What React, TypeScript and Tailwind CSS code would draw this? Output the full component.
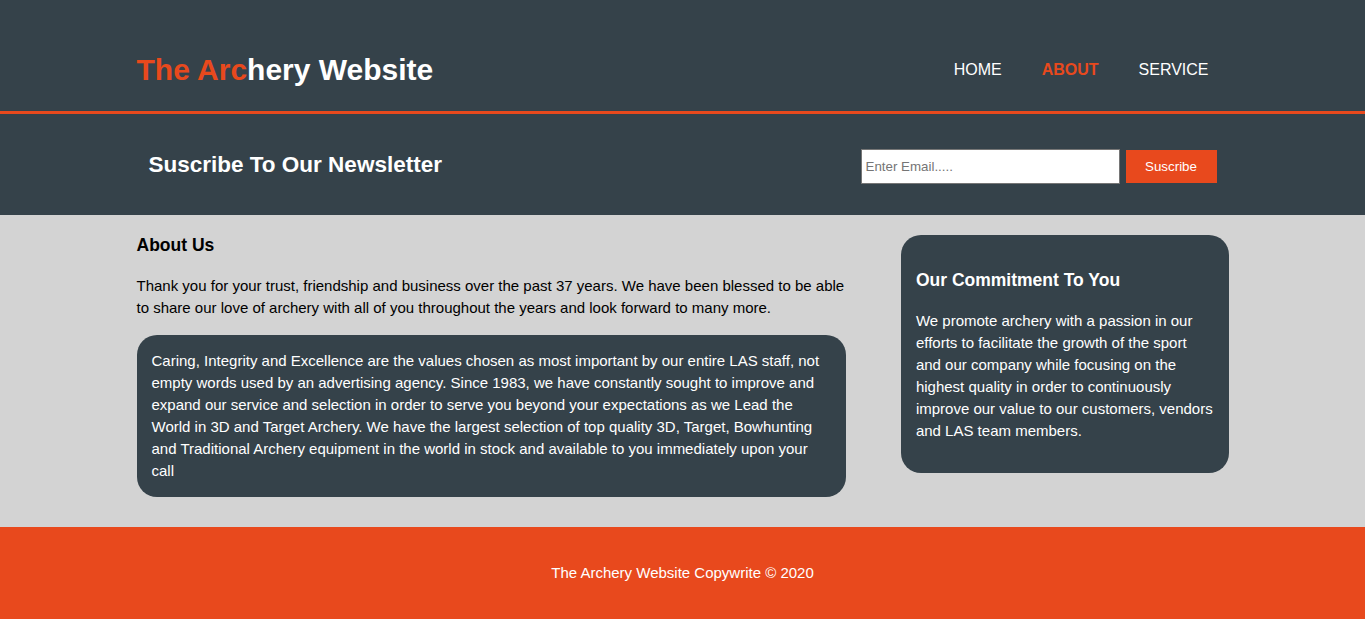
const navLinks = [
  { label: "HOME", active: false },
  { label: "ABOUT", active: true },
  { label: "SERVICE", active: false },
];

export default function App() {
  return (
    <div className="min-h-screen bg-[#d3d3d3] font-['Liberation_Sans',Arial,sans-serif] text-[15px] leading-[22px]">
      <header className="h-[114px] border-b-[3px] border-[#e8491d] bg-[#35424a] text-white">
        <div className="mx-auto flex h-full w-[80%] items-center justify-between pt-[28px]">
          <h1 className="text-[30px] font-bold leading-[34px]">
            <span className="text-[#e8491d]">The Arc</span>hery Website
          </h1>
          <ul className="flex">
            {navLinks.map((link) => (
              <li key={link.label} className="px-5">
                <a
                  href="#"
                  className={
                    link.active
                      ? "text-[16px] font-bold text-[#e8491d]"
                      : "text-[16px] text-white"
                  }
                >
                  {link.label}
                </a>
              </li>
            ))}
          </ul>
        </div>
      </header>

      <section className="h-[101px] bg-[#35424a] text-white">
        <div className="mx-auto flex h-full w-[80%] items-center justify-between px-3">
          <h2 className="text-[22.5px] font-bold leading-[26px]">Suscribe To Our Newsletter</h2>
          <form className="mt-[4px] flex items-center gap-[6px]" onSubmit={(e) => e.preventDefault()}>
            <input
              type="email"
              placeholder="Enter Email....."
              className="h-[35px] w-[259px] border border-[#767676] bg-white px-1 text-[13.33px] text-black placeholder:text-[#757575]"
            />
            <button
              type="submit"
              className="h-[33px] w-[91px] bg-[#e8491d] text-[13.33px] text-white"
            >
              Suscribe
            </button>
          </form>
        </div>
      </section>

      <main className="mx-auto flex w-[80%] items-start justify-between pt-5 pb-[30px]">
        <article className="w-[65%]">
          <h3 className="text-[17.5px] font-bold leading-[20px]">About Us</h3>
          <p className="mt-5">
            Thank you for your trust, friendship and business over the past 37 years. We have been blessed to be able
            to share our love of archery with all of you throughout the years and look forward to many more.
          </p>
          <div className="mt-4 rounded-[20px] bg-[#35424a] px-[15px] pt-[15px] pb-[15px] text-white">
            <p>
              Caring, Integrity and Excellence are the values chosen as most important by our entire LAS staff, not
              empty words used by an advertising agency. Since 1983, we have constantly sought to improve and expand
              our service and selection in order to serve you beyond your expectations as we Lead the World in 3D and
              Target Archery. We have the largest selection of top quality 3D, Target, Bowhunting and Traditional
              Archery equipment in the world in stock and available to you immediately upon your call
            </p>
          </div>
        </article>

        <aside className="w-[30%] rounded-[20px] bg-[#35424a] px-[15px] pt-[15px] pb-[31px] text-white">
          <h3 className="mt-5 text-[17.5px] font-bold leading-[20px]">Our Commitment To You</h3>
          <p className="mt-5">
            We promote archery with a passion in our efforts to facilitate the growth of the sport and our company
            while focusing on the highest quality in order to continuously improve our value to our customers, vendors
            and LAS team members.
          </p>
        </aside>
      </main>

      <footer className="flex h-[92px] items-center justify-center bg-[#e8491d] text-white">
        <p>The Archery Website Copywrite &copy; 2020</p>
      </footer>
    </div>
  );
}
